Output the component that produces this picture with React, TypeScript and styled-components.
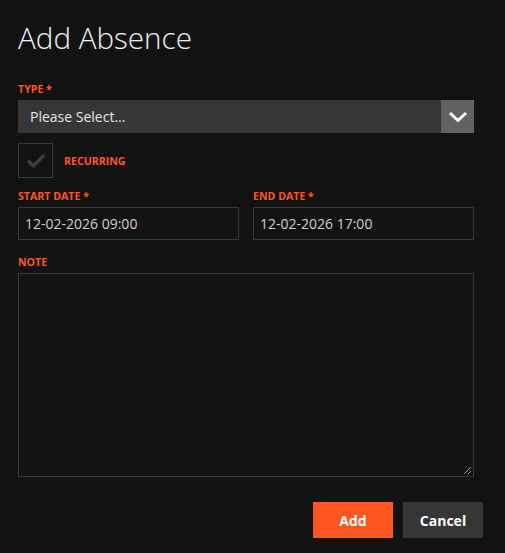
import styled, { createGlobalStyle } from 'styled-components';

const GlobalStyle = createGlobalStyle`
  html, body {
    margin: 0;
    padding: 0;
    background: #121212;
  }
  body {
    font-family: "Open Sans", "Liberation Sans", sans-serif;
  }
  * {
    box-sizing: border-box;
  }
`;

const Dialog = styled.div`
  width: 505px;
  height: 553px;
  background: #121212;
  padding: 18px 22px 0 18px;
  display: flex;
  flex-direction: column;
`;

const Title = styled.h1`
  margin: 0 0 25px;
  font-size: 29.6px;
  font-weight: 300;
  color: #f2f2f2;
  line-height: 40px;
`;

const Form = styled.div`
  width: 456px;
  display: flex;
  flex-direction: column;
`;

const Label = styled.label`
  display: block;
  font-size: 10.6px;
  font-weight: 700;
  text-transform: uppercase;
  color: #ff5722;
  line-height: 12px;
  margin-bottom: 5px;
`;

const Field = styled.div`
  display: flex;
  flex-direction: column;
`;

const SelectBox = styled.div`
  height: 33px;
  display: flex;
  background: #363636;
  color: #e6e6e6;
  font-size: 14px;
`;

const SelectText = styled.div`
  flex: 1;
  display: flex;
  align-items: center;
  padding-left: 12px;
`;

const ArrowButton = styled.div`
  width: 33px;
  height: 33px;
  background: #626262;
  display: flex;
  align-items: center;
  justify-content: center;
`;

const CheckRow = styled.div`
  display: flex;
  align-items: center;
  gap: 11px;
  margin: 10px 0 12px;
`;

const CheckBox = styled.div`
  width: 35px;
  height: 35px;
  border: 1px solid #3a3a3a;
  display: flex;
  align-items: center;
  justify-content: center;
`;

const CheckLabel = styled.span`
  font-size: 10.6px;
  font-weight: 700;
  color: #ff5722;
`;

const DateRow = styled.div`
  display: grid;
  grid-template-columns: 221px 221px;
  column-gap: 14px;
  margin-bottom: 16px;
`;

const Input = styled.div`
  height: 33px;
  border: 1px solid #3a3a3a;
  color: #d0d0d0;
  font-size: 14px;
  display: flex;
  align-items: center;
  padding-left: 6px;
`;

const TextArea = styled.div`
  position: relative;
  height: 204px;
  border: 1px solid #3a3a3a;
`;

const Grip = styled.svg`
  position: absolute;
  right: 1px;
  bottom: 1px;
`;

const Actions = styled.div`
  display: flex;
  justify-content: flex-end;
  gap: 10px;
  margin-top: 25px;
`;

const Button = styled.button<{ $primary?: boolean }>`
  width: 80px;
  height: 36px;
  border: none;
  background: ${p => (p.$primary ? '#ff5722' : '#363636')};
  color: #ffffff;
  font-family: "Open Sans", "Liberation Sans", sans-serif;
  font-size: 14px;
  font-weight: 700;
  cursor: pointer;
`;

export default function App() {
  return (
    <>
      <GlobalStyle />
      <Dialog>
        <Title>Add Absence</Title>
        <Form>
          <Field>
            <Label>Type *</Label>
            <SelectBox>
              <SelectText>Please Select...</SelectText>
              <ArrowButton>
                <svg width="20" height="12" viewBox="0 0 20 12">
                  <path d="M2 2 L10 9.5 L18 2" fill="none" stroke="#fff" strokeWidth="3" />
                </svg>
              </ArrowButton>
            </SelectBox>
          </Field>

          <CheckRow>
            <CheckBox>
              <svg width="20" height="15" viewBox="0 0 20 15">
                <path d="M2 7.5 L7.5 13 L18 2" fill="none" stroke="#3c3c3c" strokeWidth="3.4" />
              </svg>
            </CheckBox>
            <CheckLabel>RECURRING</CheckLabel>
          </CheckRow>

          <DateRow>
            <Field>
              <Label>Start Date *</Label>
              <Input>12-02-2026 09:00</Input>
            </Field>
            <Field>
              <Label>End Date *</Label>
              <Input>12-02-2026 17:00</Input>
            </Field>
          </DateRow>

          <Field>
            <Label>Note</Label>
            <TextArea>
              <Grip width="9" height="9" viewBox="0 0 9 9">
                <path d="M8 1 L1 8 M8 5 L5 8" stroke="#9a9a9a" strokeWidth="1" />
              </Grip>
            </TextArea>
          </Field>
        </Form>
        <Actions>
          <Button $primary>Add</Button>
          <Button>Cancel</Button>
        </Actions>
      </Dialog>
    </>
  );
}
